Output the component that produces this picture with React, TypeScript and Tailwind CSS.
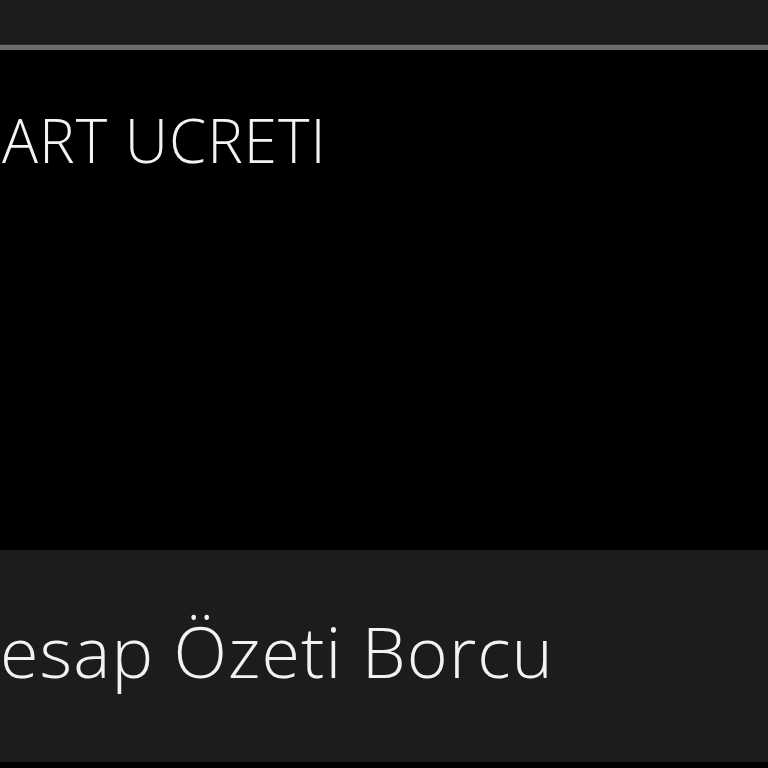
export default function App() {
  return (
    <div className="w-[768px] h-[768px] overflow-hidden bg-black flex flex-col font-['Open_Sans',sans-serif] text-[#f2f2f2]">
      {/* top bar */}
      <div className="h-[44px] bg-[#1c1c1c] shrink-0" />
      <div className="h-[1px] bg-[#2a2a2a] shrink-0" />
      <div className="h-[5px] bg-[#6c6c6c] shrink-0" />

      {/* black panel */}
      <div className="h-[500px] shrink-0 bg-black pt-[60px] overflow-hidden">
        <p className="text-[60px] leading-[60px] font-[350] tracking-[1px] whitespace-nowrap pl-[2px]">ART UCRETI</p>
      </div>

      {/* bottom panel */}
      <div className="h-[212px] shrink-0 bg-[#1c1c1c] pt-[66px] overflow-hidden">
        <p className="text-[70px] leading-[70px] font-[350] tracking-[1.1px] whitespace-nowrap">esap Özeti Borcu</p>
      </div>

      <div className="flex-1 bg-black" />
    </div>
  );
}
